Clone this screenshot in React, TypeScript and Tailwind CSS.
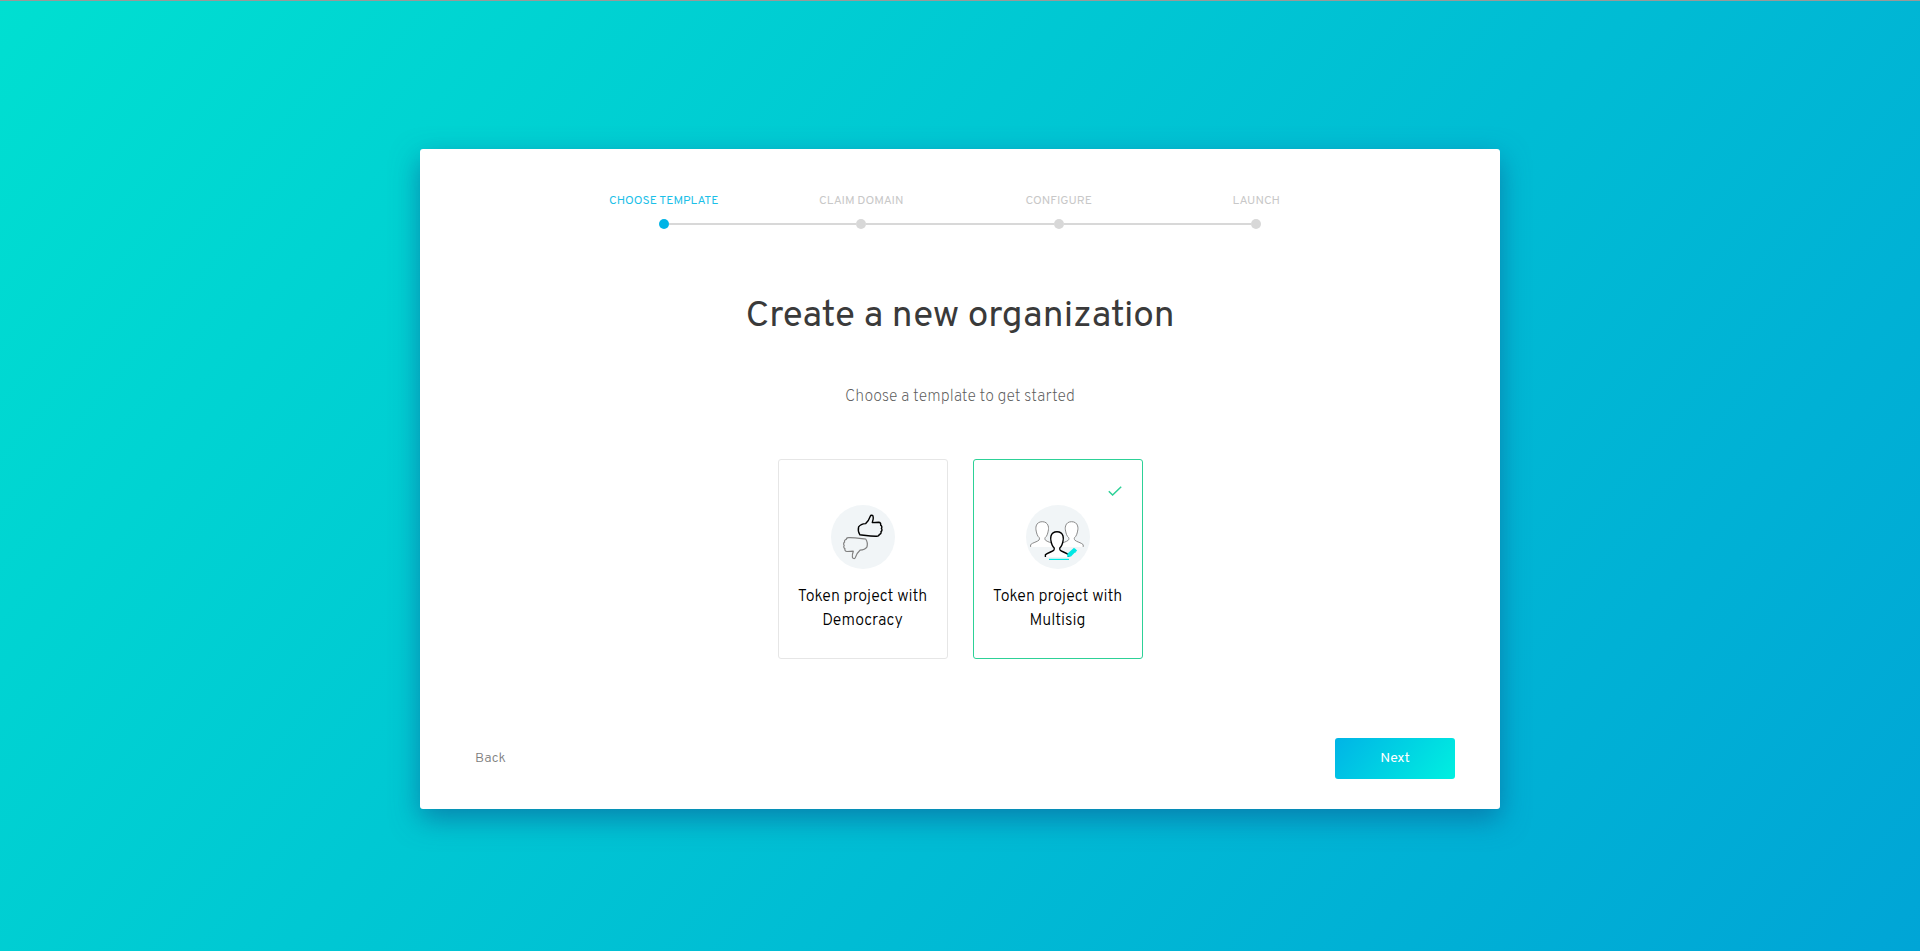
import { useState } from "react";

const steps = ["Choose template", "Claim domain", "Configure", "Launch"];

const THUMB =
  "M27.6 21.9C29.2 19.6 31.5 18.8 34.6 18.6C37.2 16.5 38.4 13.8 39.3 11.2C39.8 9.8 41.9 10 42.2 11.7C42.6 13.7 42 15.7 41.3 17.6L47.6 17.3C49.4 17.4 50.1 18.8 49.6 20.1C50.9 20.8 51.2 22.4 50.4 23.5C51.3 24.5 51.1 26 50 26.7C50.5 28.2 49.5 29.2 48.3 29.4C48.2 30.8 46.8 31.4 45.3 31.2C39.5 31.3 35 30.5 28.9 29.8C27.3 27.5 27 24.4 27.6 21.9Z";

const PERSON =
  "M-11.6 26V23.8C-9.5 21.6 -5 21 -3.2 19.2C-2.6 18.4 -2.6 17.6 -2.9 16.8C-4.8 15.4 -5.5 12.6 -6 10.2C-6.4 8.4 -6.5 6.8 -6 5C-5.2 2.2 -3 0.8 0 0.8C3 0.8 5.2 2.2 6 5C6.5 6.8 6.4 8.4 6 10.2C5.5 12.6 4.8 15.4 2.9 16.8C2.6 17.6 2.6 18.4 3.2 19.2C5 21 9.5 21.6 11.6 23.8V26";

function DemocracyIcon() {
  return (
    <svg viewBox="0 0 64 64" className="size-16" fill="none" strokeLinejoin="round" aria-hidden="true">
      <circle cx="32" cy="32" r="32" fill="#f1f5f7" />
      <path d={THUMB} stroke="#000" strokeWidth="1.4" />
      <path d={THUMB} transform="translate(63.6 63.8) rotate(180)" stroke="#808080" strokeWidth="1.2" />
    </svg>
  );
}

function MultisigIcon() {
  return (
    <svg viewBox="0 0 64 64" className="size-16" fill="none" strokeLinejoin="round" aria-hidden="true">
      <circle cx="32" cy="32" r="32" fill="#f1f5f7" />
      <path d={PERSON} transform="translate(16.2 15.9)" fill="#fff" stroke="#8a8a8a" strokeWidth="1" />
      <path d={PERSON} transform="translate(45.6 15.9)" fill="#fff" stroke="#8a8a8a" strokeWidth="1" />
      <path d={PERSON} transform="translate(31 26)" fill="#fff" stroke="#000" strokeWidth="1.4" />
      <path d="M23 54.4H43" stroke="#00e8e4" strokeWidth="1.2" />
      <path d="M41 52L41.6 48.4L48 42.8L50.8 45.6L45 51.4Z" fill="#00e8e4" />
      <path d="M49 43.9L50.6 45.4L48.7 48" stroke="#00e8e4" strokeWidth="0.8" />
    </svg>
  );
}

const templates = [
  { id: "democracy", name: "Democracy", Icon: DemocracyIcon },
  { id: "multisig", name: "Multisig", Icon: MultisigIcon },
];

function Stepper({ current }: { current: number }) {
  return (
    <ol className="mx-auto flex w-full max-w-[790px]">
      {steps.map((label, i) => (
        <li key={label} className="flex flex-1 flex-col items-center gap-2.5" aria-current={i === current ? "step" : undefined}>
          <span className={i === current ? "text-xs leading-4 text-[#1cc0e8] uppercase" : "text-xs leading-4 text-[#c8c8c8] uppercase"}>
            {label}
          </span>
          <span className="flex w-full items-center">
            <span className={i === 0 ? "h-0.5 flex-1" : "h-0.5 flex-1 bg-[#d8d8d8]"} />
            <span className={i === current ? "size-2.5 rounded-full bg-[#00b4e6]" : "size-2.5 rounded-full bg-[#d8d8d8]"} />
            <span className={i === steps.length - 1 ? "h-0.5 flex-1" : "h-0.5 flex-1 bg-[#d8d8d8]"} />
          </span>
        </li>
      ))}
    </ol>
  );
}

export default function App() {
  const [selected, setSelected] = useState("multisig");

  return (
    <div className="flex min-h-screen items-center justify-center border-t border-[#999] bg-[linear-gradient(130deg,#00dfd1,#00a5d6)] px-6 pt-1.5 font-['Overpass','Roboto',sans-serif]">
      <main className="flex min-h-[660px] w-full max-w-[1080px] flex-col rounded-[3px] bg-white px-[45px] pt-11 pb-[30px] shadow-[0_10px_28px_0_rgba(11,103,157,0.7)]">
        <Stepper current={0} />

        <h1 className="mt-[66px] text-center text-[37px] leading-[44px] text-[#3a3a3a]">Create a new organization</h1>
        <p className="mt-[46px] text-center text-base leading-6 font-extralight text-[#5c5c5c]">Choose a template to get started</p>

        <div className="mt-[50px] flex justify-center gap-[25px]">
          {templates.map(({ id, name, Icon }) => {
            const active = id === selected;
            return (
              <button
                key={id}
                type="button"
                aria-pressed={active}
                onClick={() => setSelected(id)}
                className={
                  active
                    ? "relative flex h-[200px] w-[170px] flex-col items-center justify-start gap-4 rounded-[3px] border border-[#2dd197] px-2 pt-[45px]"
                    : "relative flex h-[200px] w-[170px] flex-col items-center justify-start gap-4 rounded-[3px] border border-[#e6e6e6] px-2 pt-[45px]"
                }
              >
                {active && (
                  <svg viewBox="0 0 14 10" className="absolute top-[26px] right-5 h-2.5 w-3.5" fill="none" aria-hidden="true">
                    <path d="M0.8 5.2L4.6 9L13.2 0.8" stroke="#2dd197" strokeWidth="1.5" />
                  </svg>
                )}
                <Icon />
                <span className="text-base leading-6 font-light text-black">
                  Token project with
                  <br />
                  {name}
                </span>
              </button>
            );
          })}
        </div>

        <div className="mt-auto flex items-center justify-between">
          <button type="button" className="h-[41px] px-2.5 text-sm font-light text-[#7d7d7d]">
            Back
          </button>
          <button
            type="button"
            className="h-[41px] w-[120px] rounded-[3px] bg-[linear-gradient(130deg,#00b4e6,#00f0e0)] text-sm text-white"
          >
            Next
          </button>
        </div>
      </main>
    </div>
  );
}
